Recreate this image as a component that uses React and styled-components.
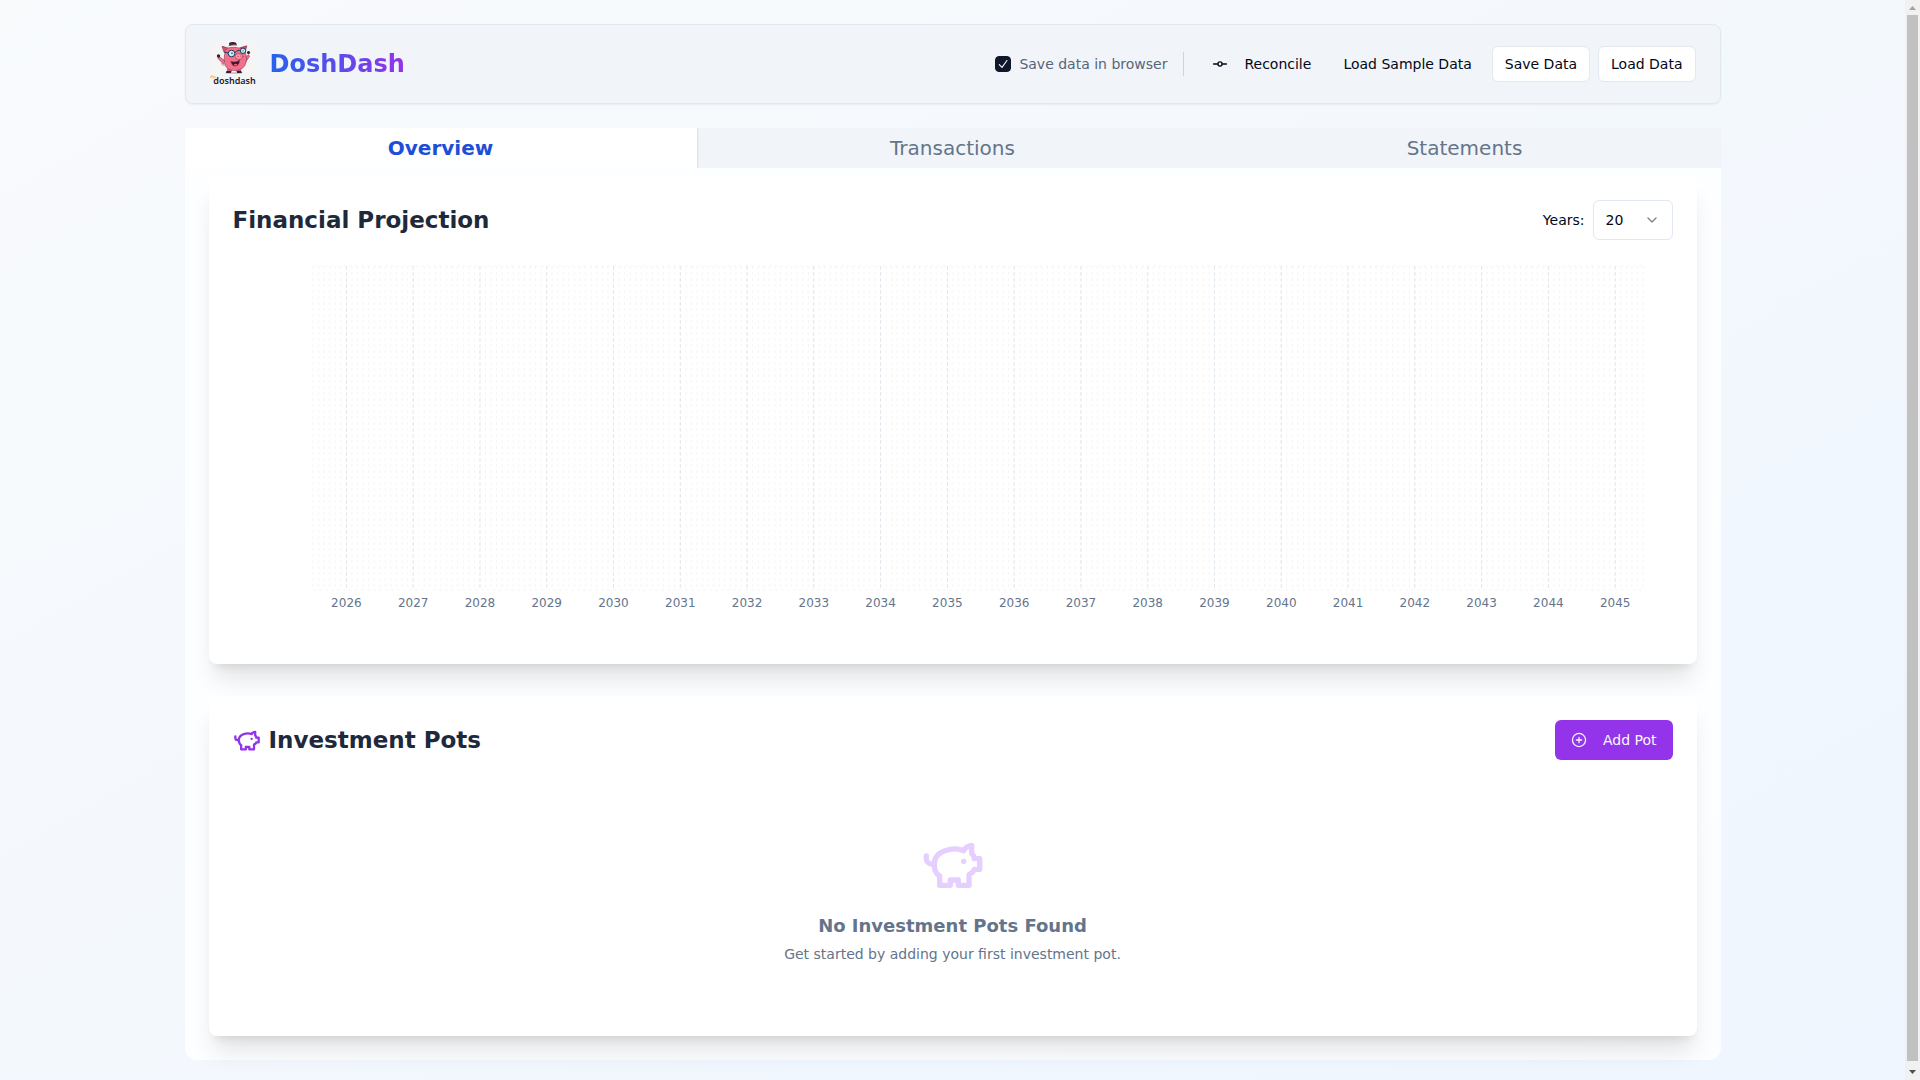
import React, { useState } from 'react';
import styled, { createGlobalStyle, css } from 'styled-components';
import { ChevronDown } from 'lucide-react';

const years = Array.from({ length: 20 }, (_, i) => 2026 + i);
const tabs = ['Overview', 'Transactions', 'Statements'];

// one grid line per month, a year label on every 12th
const MONTHS = years.length * 12;
const FIRST_YEAR_TICK = 6;
const plot = { left: 80, right: 1410, top: 26, bottom: 350 };
const monthX = (i) => plot.left + (i * (plot.right - plot.left)) / (MONTHS - 1);

const Logo = () => (
    <LogoSvg viewBox="0 0 48 46" role="img" aria-label="DoshDash logo">
        <rect width="48" height="46" fill="#f5f5f6" />
        <ellipse cx="24" cy="32" rx="9" ry="1" fill="#c9c5c8" />
        <g stroke="#8a3450" strokeWidth="0.6" strokeLinejoin="round" strokeLinecap="round">
            <path d="M14 24c-3 0-3-2-1-2" fill="none" />
            <path d="M18 27l-1 4h4l1-3zM26 28l1 3h4l-1-4z" fill="#e8607d" />
            <path d="M14.500 19.500L9 15.500l-1 2 5 5zM33 19.500l5.500-6 1 2-5 7z" fill="#f0708c" />
            <path d="M12.500 5.500l5.500 1.500c3-1 8-1 11 0l7.500-2-1.500 6c2 4 2 9 0 13-2 4-6 5.500-10.500 5.500-5.500 0-9.500-3-10-8-.4-4-.3-7 .5-10z" fill="#f2708c" />
            <path d="M12.500 5.500l5 1.800-3.500 3.400zM36.500 5l-6 2 4 4z" fill="#d94f70" />
            <ellipse cx="29" cy="15.500" rx="4" ry="3" fill="#f995a9" />
            <path d="M21 20.500c3 1 6.500 .5 8.500-1.500 0 4-2 6-4.500 6s-3.500-2-4-4.500z" fill="#3a1526" />
        </g>
        <path d="M23.500 23.500c1-1 3-1 4 0-1 1.500-3 1.500-4 0z" fill="#ef5f78" />
        <g fill="#c3edf5" stroke="#203a57" strokeWidth="1">
            <circle cx="21.500" cy="12.500" r="3.300" />
            <circle cx="33" cy="9.800" r="2.700" />
        </g>
        <path d="M25 11.500c2-2 4-2.500 5.500-2M18 12l-4-1" fill="none" stroke="#203a57" strokeWidth="1" />
        <circle cx="22" cy="12.300" r="0.800" fill="#203a57" />
        <circle cx="33" cy="9.800" r="0.600" fill="#203a57" />
        <circle cx="28" cy="15.500" r="0.600" fill="#a83450" />
        <circle cx="30.500" cy="15" r="0.600" fill="#a83450" />
        <path d="M17 5.500c3-1 7-1.500 10-1l-1-2.800c-2-1-5-.8-7 .3l.3 2.500z" fill="#2b2233" />
        <path d="M19.300 4.300c2-.6 4-.9 6.500-.7" stroke="#c3343f" strokeWidth="0.800" />
        <g fill="#2b2233">
            <circle cx="8.500" cy="15" r="1.700" />
            <circle cx="38.500" cy="11.500" r="1.600" />
            <path d="M16.500 30h4.500v2h-5zM27 30h4l1 2h-5z" />
        </g>
        <path d="M1 37c-.5-1.500 0-2.500 1.500-2s1.500 2 0 2.500M4.500 35.500l1 1.500" fill="none" stroke="#f0a83a" strokeWidth="1" />
        <LogoText x="24.500" y="43" textAnchor="middle">doshdash</LogoText>
    </LogoSvg>
);

const CommitIcon = () => (
    <Icon viewBox="0 0 15 15" fill="none" stroke="currentColor" strokeWidth="1.250" strokeLinecap="round">
        <circle cx="7.500" cy="7.500" r="1.975" />
        <path d="M1.500 7.500h4M9.500 7.500h4" />
    </Icon>
);

const PlusCircledIcon = () => (
    <Icon viewBox="0 0 15 15" fill="none" stroke="currentColor" strokeWidth="1.200" strokeLinecap="round">
        <circle cx="7.500" cy="7.500" r="6.150" />
        <path d="M7.500 5v5M5 7.500h5" />
    </Icon>
);

const PiggyIcon = ({ size, color }) => (
    <svg width={size} height={size} viewBox="0 0 24 24" fill="none" stroke={color} strokeWidth="2" strokeLinecap="round" strokeLinejoin="round" aria-hidden="true">
        <path d="M19 5c-1.500 0-2.800 1.400-3 2-3.500-1.500-11-.3-11 5 0 1.800 0 3 2 4.500V20h4v-2h3v2h4v-4c1-.5 1.700-1 2-2h2v-4h-2c0-1-.5-1.500-1-2V5z" />
        <path d="M2 9v1c0 1.100.9 2 2 2h1" />
        <path d="M16 11h.01" />
    </svg>
);

const ProjectionChart = () => (
    <ChartSvg viewBox="0 0 1440 400" role="img" aria-label="Financial projection by year">
        <g stroke="#ccc" strokeOpacity="0.2" strokeDasharray="3 3">
            <path d={`M${plot.left} ${plot.top}H${plot.right}M${plot.left} ${plot.bottom}H${plot.right}`} />
            {Array.from({ length: MONTHS }, (_, i) => (
                <line key={i} x1={monthX(i)} x2={monthX(i)} y1={plot.top} y2={plot.bottom} />
            ))}
        </g>
        {years.map((year, i) => {
            const x = monthX(FIRST_YEAR_TICK + i * 12);
            return (
                <g key={year}>
                    <line x1={x} x2={x} y1={plot.top} y2={plot.bottom} stroke="#e2e8f0" strokeDasharray="4 2" />
                    <text x={x} y="367" textAnchor="middle">{year}</text>
                </g>
            );
        })}
    </ChartSvg>
);

const App = () => {
    const [activeTab, setActiveTab] = useState('Overview');
    const [saveData, setSaveData] = useState(true);
    const [range, setRange] = useState('20');

    return (
        <>
            <GlobalStyle />
            <Viewport>
                <ScrollArea>
                    <Page>
                        <Container>
                            <Header>
                                <Brand>
                                    <Logo />
                                    <BrandName>DoshDash</BrandName>
                                </Brand>
                                <Actions>
                                    <CheckLabel>
                                        <CheckBox>
                                            <input type="checkbox" checked={saveData} onChange={(e) => setSaveData(e.target.checked)} />
                                            {saveData && (
                                                <Icon viewBox="0 0 15 15" fill="none" stroke="#fff" strokeLinecap="round" strokeLinejoin="round">
                                                    <path d="M4 8l2.600 2.700L11.200 4.200" />
                                                </Icon>
                                            )}
                                        </CheckBox>
                                        Save data in browser
                                    </CheckLabel>
                                    <Separator />
                                    <Buttons>
                                        <Button><CommitIcon />Reconcile</Button>
                                        <Button>Load Sample Data</Button>
                                        <Button $outline>Save Data</Button>
                                        <Button $outline>Load Data</Button>
                                    </Buttons>
                                </Actions>
                            </Header>

                            <TabList role="tablist">
                                {tabs.map((tab) => (
                                    <Tab key={tab} role="tab" aria-selected={tab === activeTab} $active={tab === activeTab} onClick={() => setActiveTab(tab)}>
                                        {tab}
                                    </Tab>
                                ))}
                            </TabList>

                            <Panel role="tabpanel">
                                <Card>
                                    <CardHeader>
                                        <CardTitle>Financial Projection</CardTitle>
                                        <Field>
                                            <label htmlFor="years">Years:</label>
                                            <SelectWrap>
                                                <select id="years" value={range} onChange={(e) => setRange(e.target.value)}>
                                                    <option>5</option>
                                                    <option>10</option>
                                                    <option>20</option>
                                                    <option>30</option>
                                                </select>
                                                <ChevronDown size={16} />
                                            </SelectWrap>
                                        </Field>
                                    </CardHeader>
                                    <ProjectionChart />
                                </Card>

                                <Card>
                                    <CardHeader>
                                        <CardTitle><PiggyIcon size={28} color="#9333ea" />Investment Pots</CardTitle>
                                        <Button $primary><PlusCircledIcon />Add Pot</Button>
                                    </CardHeader>
                                    <EmptyState>
                                        <PiggyIcon size={64} color="#e6ceff" />
                                        <h3>No Investment Pots Found</h3>
                                        <p>Get started by adding your first investment pot.</p>
                                    </EmptyState>
                                </Card>
                            </Panel>
                        </Container>
                    </Page>
                </ScrollArea>
                <Scrollbar aria-hidden="true">
                    <ScrollArrow viewBox="0 0 15 15"><path d="M4 10h7L7.500 6z" fill="#a3a3a3" /></ScrollArrow>
                    <ScrollThumb />
                    <ScrollArrow viewBox="0 0 15 15"><path d="M4 5h7L7.500 9z" fill="#505050" /></ScrollArrow>
                </Scrollbar>
            </Viewport>
        </>
    );
}

export default App;

const GlobalStyle = createGlobalStyle`
*, *::before, *::after {
    box-sizing: border-box;
}
body {
    margin: 0;
    font-family: "DejaVu Sans", sans-serif;
    font-size: 14px;
    line-height: 20px;
    color: #020817;
}
h1, h2, h3, p {
    margin: 0;
}
button, select {
    font: inherit;
    color: inherit;
}
`;

const Viewport = styled.div`
display: flex;
height: 100vh;
`;
const ScrollArea = styled.div`
flex: 1;
min-width: 0;
overflow-y: auto;
scrollbar-width: none;
`;
const Scrollbar = styled.div`
display: flex;
flex-direction: column;
align-items: center;
width: 15px;
background-color: #f1f1f1;
`;
const ScrollArrow = styled.svg`
display: block;
width: 15px;
height: 15px;
`;
const ScrollThumb = styled.div`
flex: 1;
width: 11px;
margin-bottom: 4px;
background-color: #c1c1c1;
`;
const Page = styled.div`
min-height: 100%;
padding: 24px;
background: linear-gradient(to bottom right, #f8fafc, #eff6ff);
`;
const Container = styled.main`
max-width: 1536px;
margin: 0 auto;
`;
const Header = styled.header`
display: flex;
align-items: center;
justify-content: space-between;
padding: 16px 24px;
margin-bottom: 24px;
border: 1px solid #e2e8f0;
border-radius: 8px;
background-color: #f1f5f9;
box-shadow: 0 1px 2px rgba(0, 0, 0, 0.05);
`;
const Brand = styled.div`
display: flex;
align-items: center;
gap: 12px;
`;
const LogoSvg = styled.svg`
display: block;
width: 48px;
height: 46px;
`;
const LogoText = styled.text`
font-family: "Noto Sans", sans-serif;
font-size: 9px;
font-weight: 600;
fill: #1c1a33;
`;
const BrandName = styled.h1`
font-size: 24px;
line-height: 32px;
font-weight: 700;
color: transparent;
background: linear-gradient(to right, #2563eb, #9333ea);
background-clip: text;
`;
const Actions = styled.div`
display: flex;
align-items: center;
gap: 16px;
`;
const CheckLabel = styled.label`
display: flex;
align-items: center;
gap: 8px;
color: #56657a;
`;
const CheckBox = styled.span`
display: grid;
width: 16px;
height: 16px;

> * {
    grid-area: 1 / 1;
}
input {
    appearance: none;
    width: 16px;
    height: 16px;
    margin: 0;
    border: 1px solid #0f172a;
    border-radius: 4px;
}
input:checked {
    background-color: #0f172a;
}
svg {
    pointer-events: none;
}
`;
const Separator = styled.div`
width: 1px;
height: 24px;
background-color: #cbd5e1;
`;
const Buttons = styled.div`
display: flex;
gap: 8px;
`;
const Icon = styled.svg`
width: 16px;
height: 16px;
flex-shrink: 0;
`;
const Button = styled.button`
display: inline-flex;
align-items: center;
justify-content: center;
gap: 16px;
height: 36px;
padding: 0 12px;
border: 0;
border-radius: 6px;
background: none;
cursor: pointer;
${props => props.$outline && css`
    border: 1px solid #e2e8f0;
    background-color: #fff;
`}
${props => props.$primary && css`
    height: 40px;
    padding: 0 16px;
    color: #f8fafc;
    background-color: #9333ea;
`}
`;
const TabList = styled.div`
display: grid;
grid-template-columns: repeat(3, 1fr);
height: 40px;
overflow: hidden;
background-color: #f1f5f9;
`;
const Tab = styled.button`
border: 0;
padding: 0 12px;
font-size: 20px;
line-height: 28px;
color: #64748b;
background: none;
cursor: pointer;
${props => props.$active && css`
    font-weight: 700;
    color: #1d4ed8;
    background-color: #fff;
    box-shadow: 1px 0 2px rgba(0, 0, 0, 0.1);
`}
`;
const Panel = styled.div`
display: flex;
flex-direction: column;
gap: 32px;
padding: 8px 24px 24px;
border-radius: 0 0 12px 12px;
background-color: rgba(255, 255, 255, 0.8);
`;
const Card = styled.section`
padding: 24px;
border-radius: 8px;
background-color: #fff;
box-shadow: 0 20px 25px -5px rgba(0, 0, 0, 0.1), 0 8px 10px -6px rgba(0, 0, 0, 0.1);
`;
const CardHeader = styled.div`
display: flex;
align-items: center;
justify-content: space-between;
`;
const CardTitle = styled.h2`
display: flex;
align-items: center;
gap: 8px;
font-size: 23px;
line-height: 32px;
font-weight: 700;
color: #1e293b;
`;
const Field = styled.div`
display: flex;
align-items: center;
gap: 8px;
`;
const SelectWrap = styled.div`
position: relative;

select {
    display: block;
    appearance: none;
    width: 80px;
    height: 40px;
    padding: 0 12px;
    border: 1px solid #e2e8f0;
    border-radius: 6px;
    background-color: #fff;
}
svg {
    position: absolute;
    top: 12px;
    right: 13px;
    opacity: 0.5;
    pointer-events: none;
}
`;
const ChartSvg = styled.svg`
display: block;
width: 100%;

text {
    font-size: 12px;
    fill: #64748b;
}
`;
const EmptyState = styled.div`
display: flex;
flex-direction: column;
align-items: center;
padding: 48px 0;
margin-top: 24px;
color: #64748b;

h3 {
    margin: 16px 0 4px;
    font-size: 18px;
    line-height: 28px;
    font-weight: 700;
}
`;
